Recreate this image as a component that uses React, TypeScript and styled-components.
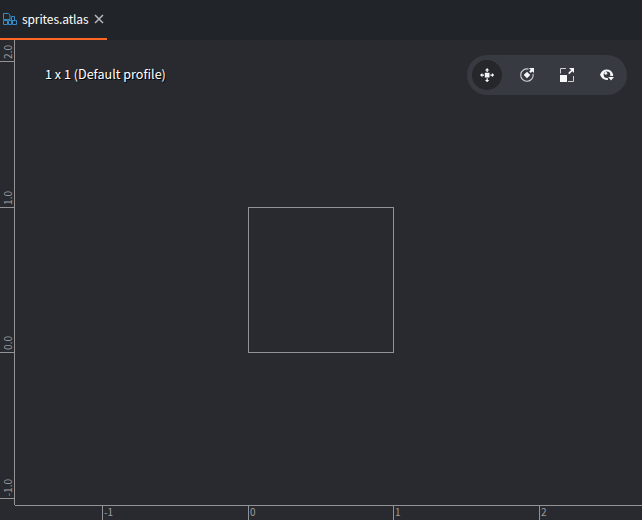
import React from "react";
import styled, { createGlobalStyle } from "styled-components";

const LINE = "#929395";

const GlobalStyle = createGlobalStyle`
  * { box-sizing: border-box; }
  body { margin: 0; background: #292a2f; overflow: hidden; }
`;

const Editor = styled.div`
  display: flex;
  flex-direction: column;
  width: 642px;
  height: 520px;
  background: #292a2f;
  font-family: "Noto Sans CJK SC", "Noto Sans", sans-serif;
`;

const TabBar = styled.header`
  display: flex;
  height: 40px;
  background: #212428;
`;

const Tab = styled.div`
  display: flex;
  align-items: center;
  width: 107px;
  height: 40px;
  padding-left: 3px;
  border-bottom: 2px solid #fd6623;
  color: #fff;
`;

const TabTitle = styled.span`
  width: 67px;
  margin-left: 4px;
  font-size: 12px;
  line-height: 18px;
  letter-spacing: -0.1px;
  white-space: nowrap;
`;

const CloseButton = styled.button`
  display: flex;
  margin: 0 0 0 5px;
  padding: 0;
  border: 0;
  background: none;
`;

const Workspace = styled.main`
  display: grid;
  grid-template-columns: 15px 1fr;
  grid-template-rows: 465px 15px;
`;

const VerticalRuler = styled.div`
  display: flex;
  flex-direction: column;
  border-right: 1px solid ${LINE};
`;

const VerticalSegment = styled.div<{ $size: number }>`
  display: flex;
  flex: 0 0 ${(p) => p.$size}px;
  align-items: flex-end;
  padding: 0 0 2px 2px;
  border-bottom: 1px solid ${LINE};
`;

const RulerText = styled.span<{ $vertical?: boolean }>`
  color: #9b9c9e;
  font-family: "Noto Sans CJK SC", sans-serif;
  font-size: 10px;
  line-height: 12px;
  white-space: nowrap;
  ${(p) => p.$vertical && "writing-mode: vertical-rl; transform: rotate(180deg);"}
`;

const HorizontalRuler = styled.div`
  display: flex;
  grid-column: 2;
  height: 15px;
  border-top: 1px solid ${LINE};
`;

const HorizontalSegment = styled.div<{ $size: number }>`
  display: flex;
  flex: 0 0 ${(p) => p.$size}px;
  height: 14px;
  padding: 0 0 0 1px;
  border-left: 1px solid ${LINE};
`;

const RulerLead = styled.div`
  flex: 0 0 87px;
`;

const Canvas = styled.section`
  position: relative;
  display: flex;
  justify-content: space-between;
  align-items: flex-start;
  padding: 15px 15px 0 30px;
`;

const SizeLabel = styled.div`
  margin-top: 9px;
  color: #fff;
  font-size: 12.6px;
  line-height: 20px;
  white-space: nowrap;
  text-shadow: 1px 1px 0 #000;
`;

const AtlasFrame = styled.div`
  position: absolute;
  left: 233px;
  top: 167px;
  width: 146px;
  height: 146px;
  border: 1px solid ${LINE};
`;

const Toolbar = styled.nav`
  display: flex;
  align-items: center;
  width: 160px;
  height: 40px;
  padding: 0 5px;
  gap: 10px;
  border-radius: 20px;
  background: #373a41;
`;

const ToolButton = styled.button<{ $active?: boolean }>`
  display: flex;
  align-items: center;
  justify-content: center;
  width: 30px;
  height: 30px;
  padding: 0;
  border: 0;
  border-radius: 50%;
  background: ${(p) => (p.$active ? "#25272b" : "transparent")};
`;

const AtlasIcon = () => (
  <svg width="15" height="14" viewBox="0 0 15 14" fill="none" stroke="#368bc7">
    <path d="M.5 7.5v-6h5l1.5 1.5v4.5z M.5 8.5h4v4h-4z M5.5 8.5h3v4h-3z M9.5 8.5h4v4h-4z M8.5 4.5h3v4h-3z" />
  </svg>
);

const CloseIcon = () => (
  <svg width="10" height="10" viewBox="0 0 10 10" stroke="#b7b9bd" strokeWidth="1.5">
    <path d="M1 1l8 8M9 1L1 9" />
  </svg>
);

const MoveIcon = () => (
  <svg width="14" height="14" viewBox="0 0 14 14" fill="#f6f7f9">
    <path d="M4.8 4.8h4.7v4.7H4.8z M7.1 0L9.3 2.4H7.8V4H6.5V2.4H5z M7.1 14.3L9.3 11.9H7.8v-1.6H6.5v1.6H5z M0 7.1L2.4 5v1.5H4v1.3H2.4v1.4z M14.3 7.1L11.9 5v1.5h-1.6v1.3h1.6v1.4z" />
  </svg>
);

const RotateIcon = () => (
  <svg width="14" height="14" viewBox="0 0 14 14" fill="none">
    <path d="M8.5 1.1A6.2 6.2 0 1 0 13 5.8" stroke="#d0d2d6" strokeWidth="1.1" />
    <path d="M7 3.7L10.3 7 7 10.3 3.7 7z M9 0h5v5l-1.7-1.5-1.6 1.4-1.5-1.5 1.5-1.6z" fill="#f6f7f9" />
  </svg>
);

const ScaleIcon = () => (
  <svg width="14" height="14" viewBox="0 0 14 14" fill="none">
    <path d="M.5 5.5v-5h5.5 M13.5 8v5.5H8" stroke="#cfd1d5" />
    <path d="M0 7h7v7H0z M9 0h5v5l-1.7-1.7-3 3-1.2-1.2 3-3z" fill="#f6f7f9" />
  </svg>
);

const VisibilityIcon = () => (
  <svg width="14" height="12" viewBox="0 0 14 12">
    <path d="M0 5.8C1.2 2.4 3.8.6 6.8.6s5.4 1.8 6.5 5.2l-.5 1.2H7.9v3.9C4 11.3 1.2 9.2 0 5.8z" fill="#f6f7f9" />
    <circle cx="7" cy="5.7" r="3.3" fill="#373a41" />
    <circle cx="5.8" cy="4.3" r="1.4" fill="#f6f7f9" />
    <path d="M7.4 7.2h6.6L10.9 11.4z" fill="#373a41" />
    <path d="M8.2 8H14L11.1 11.4z" fill="#f6f7f9" />
  </svg>
);

const verticalMarks = [
  { label: "2.0", size: 22 },
  { label: "1.0", size: 146 },
  { label: "0.0", size: 145 },
  { label: "-1.0", size: 146 },
];

const horizontalMarks = [
  { label: "-1", size: 146 },
  { label: "0", size: 145 },
  { label: "1", size: 146 },
  { label: "2", size: 103 },
];

const tools = [
  { name: "Move", icon: MoveIcon },
  { name: "Rotate", icon: RotateIcon },
  { name: "Scale", icon: ScaleIcon },
  { name: "Visibility", icon: VisibilityIcon },
];

export default function App() {
  return (
    <Editor>
      <GlobalStyle />
      <TabBar>
        <Tab>
          <AtlasIcon />
          <TabTitle>sprites.atlas</TabTitle>
          <CloseButton aria-label="Close">
            <CloseIcon />
          </CloseButton>
        </Tab>
      </TabBar>
      <Workspace>
        <VerticalRuler>
          {verticalMarks.map((m) => (
            <VerticalSegment key={m.label} $size={m.size}>
              <RulerText $vertical>{m.label}</RulerText>
            </VerticalSegment>
          ))}
        </VerticalRuler>
        <Canvas>
          <SizeLabel>1 x 1 (Default profile)</SizeLabel>
          <Toolbar>
            {tools.map(({ name, icon: Icon }, i) => (
              <ToolButton key={name} aria-label={name} $active={i === 0}>
                <Icon />
              </ToolButton>
            ))}
          </Toolbar>
          <AtlasFrame />
        </Canvas>
        <HorizontalRuler>
          <RulerLead />
          {horizontalMarks.map((m) => (
            <HorizontalSegment key={m.label} $size={m.size}>
              <RulerText>{m.label}</RulerText>
            </HorizontalSegment>
          ))}
        </HorizontalRuler>
      </Workspace>
    </Editor>
  );
}
